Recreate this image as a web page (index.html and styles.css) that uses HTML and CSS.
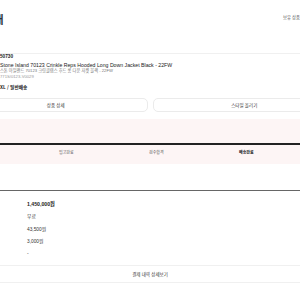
FILE: index.html
```html
<!DOCTYPE html>
<html lang="ko">
<head>
<meta charset="utf-8">
<link rel="stylesheet" href="styles.css">
</head>
<body>
<div class="page">
  <header class="top">
    <div class="title-box"><h1 class="title">내</h1></div>
    <span class="keep">보유 상품</span>
  </header>
  <div class="order">
    <div class="order-box"><span class="order-no">50730</span></div>
  </div>
  <section class="product">
    <div class="thumb"></div>
    <div class="info">
      <p class="name">Stone Island 70123 Crinkle Reps Hooded Long Down Jacket Black - 22FW</p>
      <p class="kor">스톤 아일랜드 70123 크링클렙스 후드 롱 다운 자켓 블랙 - 22FW</p>
      <p class="model">771S/0123-V0029</p>
      <p class="option">XL / 일반배송</p>
    </div>
  </section>
  <div class="actions">
    <button class="btn">상품 상세</button>
    <button class="btn">스타일 올리기</button>
  </div>
  <section class="status">
    <div class="bar"></div>
    <div class="steps">
      <span class="step"></span>
      <span class="step">입고완료</span>
      <span class="step">검수합격</span>
      <span class="step current">배송완료</span>
    </div>
  </section>
  <section class="pay">
    <div class="row"><span class="label"></span><span class="value strong">1,450,000원</span></div>
    <div class="row"><span class="label"></span><span class="value">무료</span></div>
    <div class="row"><span class="label"></span><span class="value">43,500원</span></div>
    <div class="row"><span class="label"></span><span class="value">3,000원</span></div>
    <div class="row"><span class="label"></span><span class="value">-</span></div>
  </section>
  <div class="detail">결제 내역 상세보기</div>
</div>
</body>
</html>
```
FILE: styles.css
```css
html, body {
  margin: 0;
  padding: 0;
  background: #fff;
  overflow: hidden;
}
body {
  font-family: "Liberation Sans", "Noto Sans CJK KR", sans-serif;
  color: #222;
}
.page {
  margin-left: -36px;
  width: 372px;
}
.top {
  display: flex;
  justify-content: space-between;
  align-items: flex-start;
  height: 41px;
  padding-right: 36px;
}
.title-box {
  width: 39.5px;
  display: flex;
  justify-content: flex-end;
  flex: none;
}
.title {
  margin: 12px 0 0;
  font-size: 11px;
  line-height: 14px;
  font-weight: 700;
  white-space: nowrap;
  color: #333;
  font-family: "Noto Sans CJK KR", sans-serif;
}
.keep {
  margin-top: 14px;
  font-size: 4.3px;
  line-height: 6px;
  color: #555;
  white-space: nowrap;
  font-family: "Noto Sans CJK KR", sans-serif;
}
.order {
  height: 13px;
  padding-top: 3px;
  box-sizing: border-box;
  border-bottom: 1px solid #f0f0f0;
}
.order-box {
  padding-left: 36px;
}
.order-no {
  white-space: nowrap;
  font-size: 4.7px;
  line-height: 6px;
  font-weight: 700;
}
.product {
  display: flex;
  gap: 4px;
  padding: 8px 0 8px;
}
.thumb {
  width: 32px;
  flex: none;
}
.info p {
  margin: 0;
  line-height: 6px;
  white-space: nowrap;
}
.name {
  font-size: 5.2px;
}
.kor {
  font-size: 4.2px;
  color: #777;
}
.model {
  font-size: 4.2px;
  color: #999;
}
.option {
  margin-top: 4px !important;
  font-size: 4.7px;
  font-weight: 700;
  font-family: "Noto Sans CJK KR", sans-serif;
}
.actions {
  display: flex;
  gap: 5px;
}
.btn {
  flex: 1;
  height: 14px;
  border: 1px solid #ebebeb;
  border-radius: 5px;
  background: #fff;
  padding: 0;
  font-family: "Noto Sans CJK KR", sans-serif;
  font-size: 4.5px;
  color: #333;
}
.status {
  margin-top: 7px;
  background: #fdf5f5;
  padding: 24px 0 9px;
}
.bar {
  height: 2px;
  background: #222;
}
.steps {
  display: grid;
  grid-template-columns: repeat(4, 90px);
  padding-left: 4px;
  margin-top: 4px;
}
.step {
  font-family: "Noto Sans CJK KR", sans-serif;
  font-size: 4px;
  line-height: 6px;
  min-height: 6px;
  color: #555;
  padding-left: 1px;
}
.step.current {
  font-weight: 700;
  color: #222;
}
.pay {
  margin-top: 26px;
  border-top: 1px solid #666;
  padding-top: 6px;
}
.row {
  display: flex;
  height: 12.5px;
  align-items: center;
}
.label {
  width: 63px;
  flex: none;
}
.value {
  font-family: "Liberation Sans", "Noto Sans CJK KR", sans-serif;
  font-size: 4.8px;
  color: #333;
}
.value.strong {
  font-weight: 700;
  color: #222;
  font-size: 5.2px;
}
.detail {
  margin-top: 5px;
  height: 18px;
  box-sizing: border-box;
  border-top: 1px solid #f0f0f0;
  border-bottom: 1px solid #f0f0f0;
  display: flex;
  align-items: center;
  justify-content: center;
  font-family: "Noto Sans CJK KR", sans-serif;
  font-size: 4.5px;
  color: #333;
}
```
